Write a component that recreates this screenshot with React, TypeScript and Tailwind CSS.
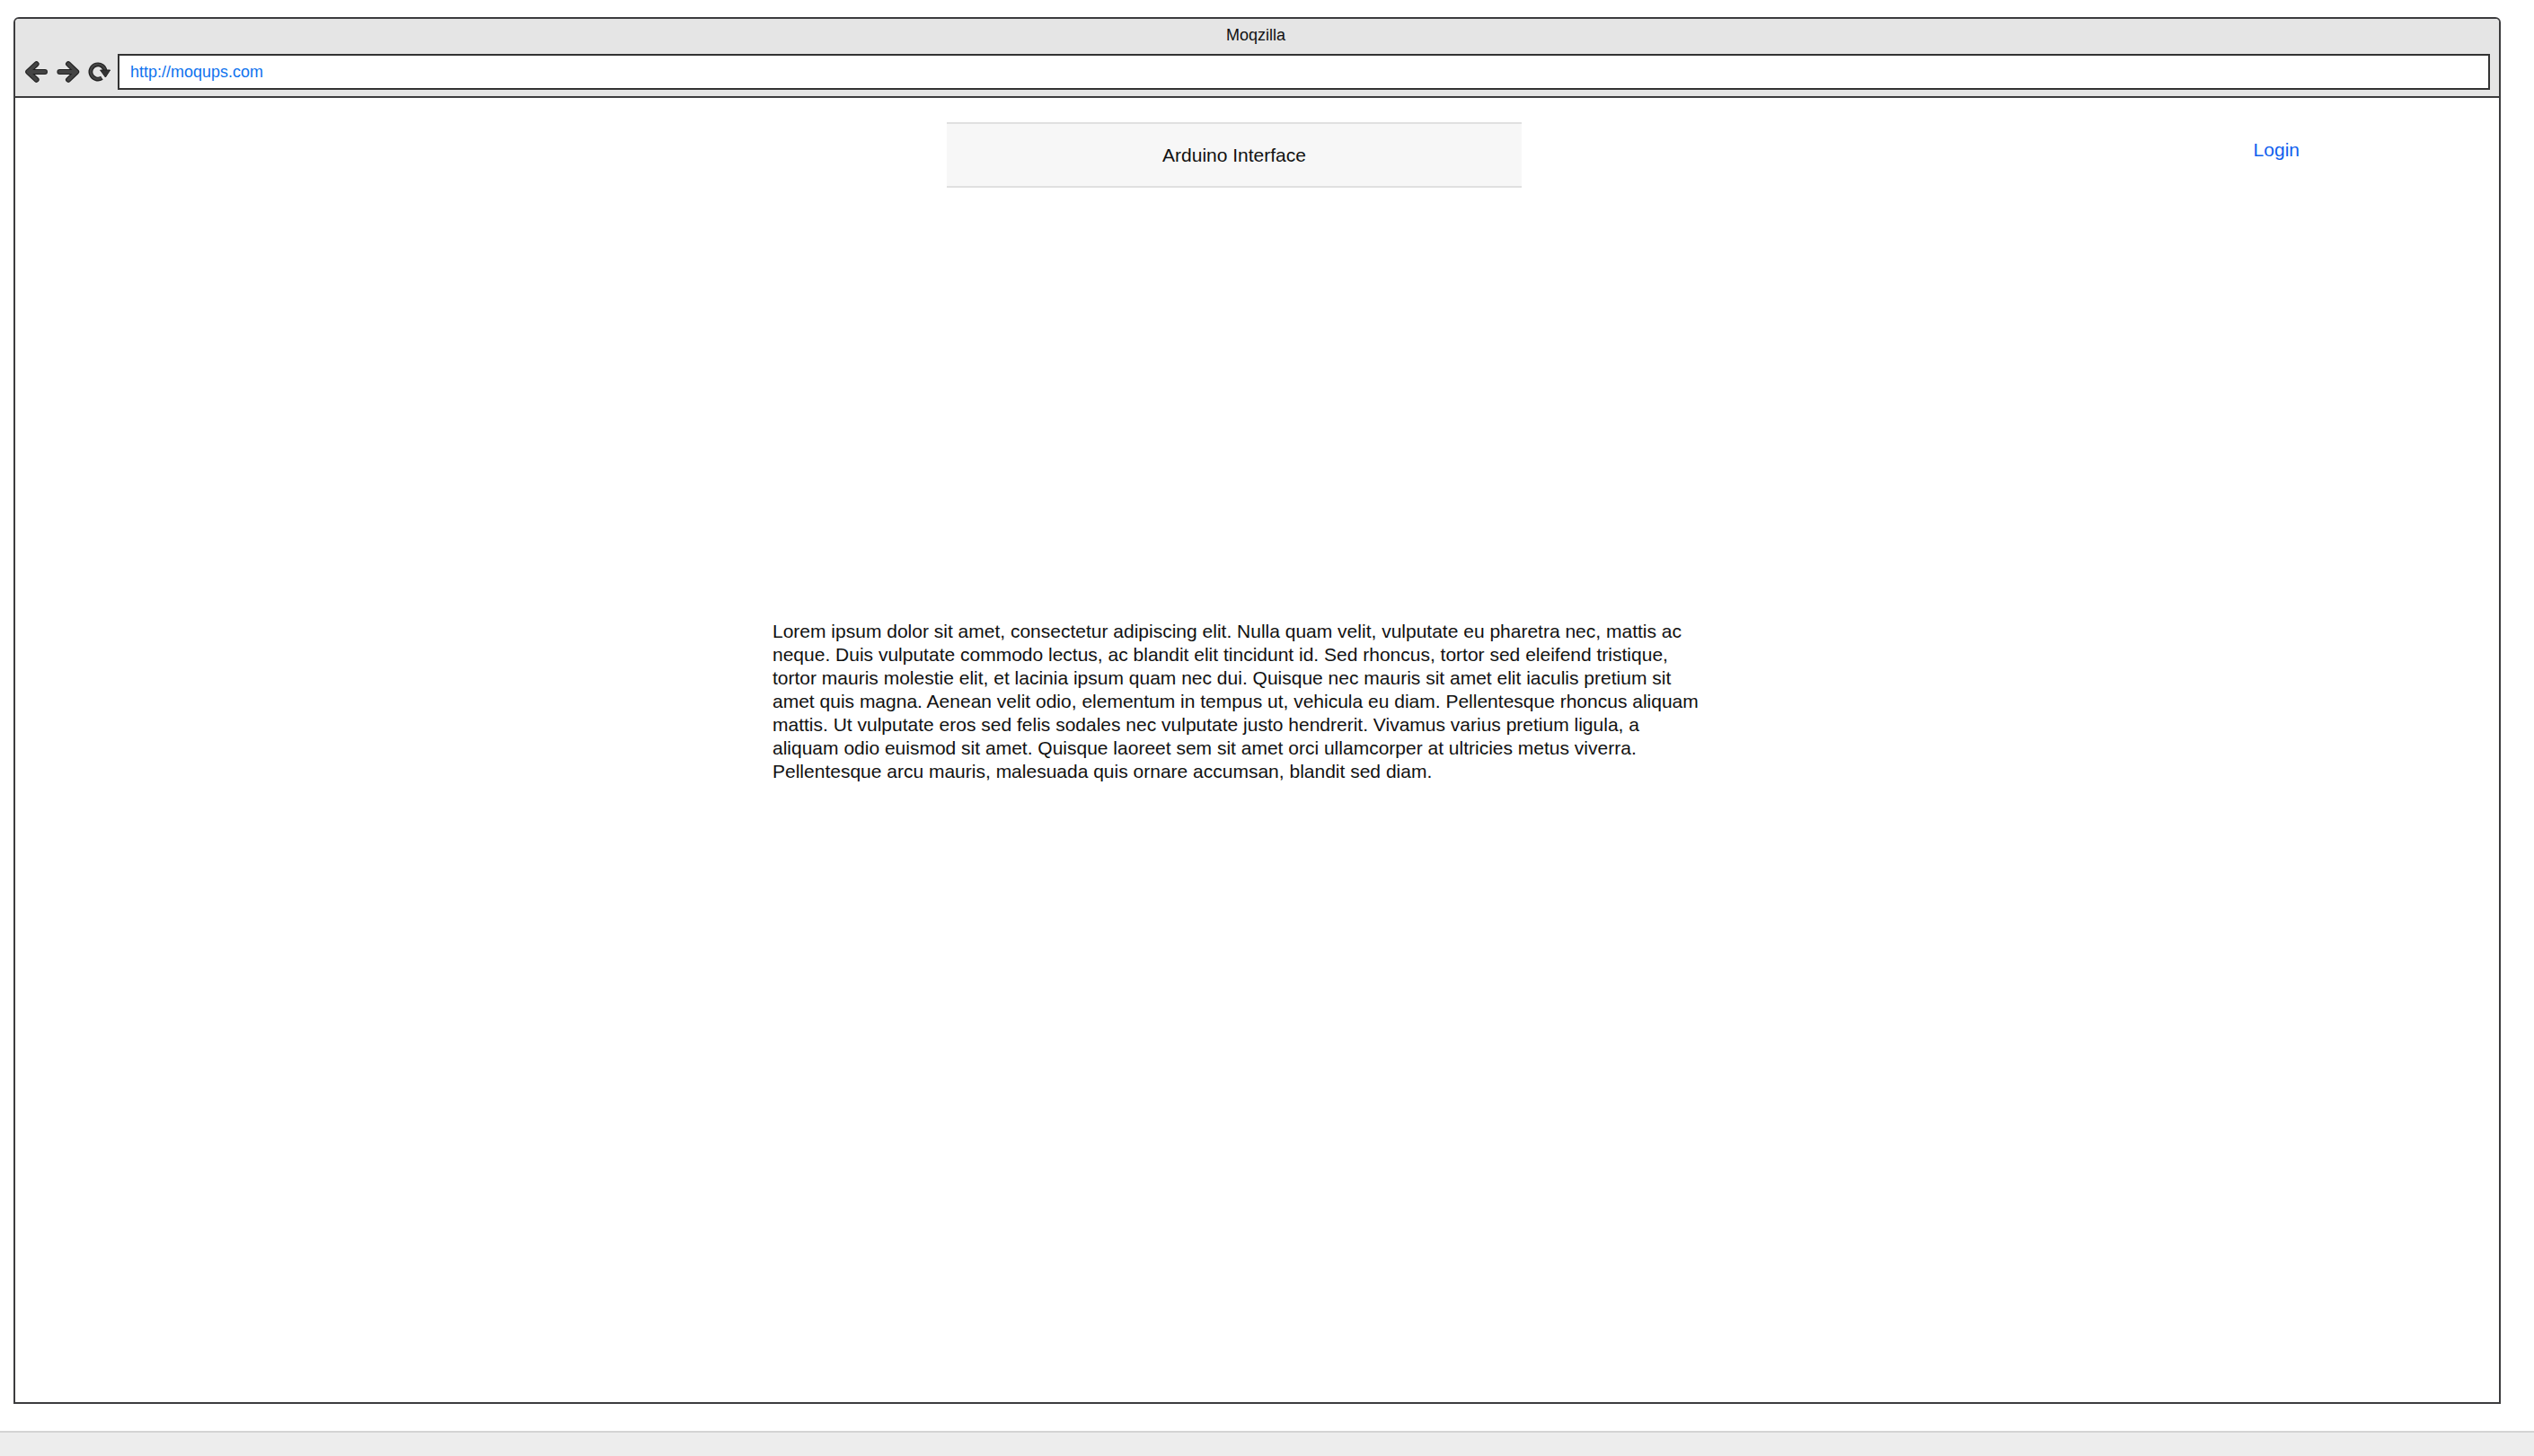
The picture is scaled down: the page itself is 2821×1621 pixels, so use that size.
import type { FormEvent } from "react";

function BackIcon() {
  return (
    <svg viewBox="0 0 26 24" className="h-6 w-[26px]" fill="none" strokeLinecap="round" strokeLinejoin="round" aria-hidden="true">
      <path d="M12.6 3.2 L3.2 12 L12.6 20.8 M4 12 H22" stroke="#222" strokeWidth="6" />
      <path d="M12.6 3.2 L3.2 12 L12.6 20.8 M4 12 H22" stroke="#444" strokeWidth="3.8" />
    </svg>
  );
}

function ForwardIcon() {
  return (
    <svg viewBox="0 0 26 24" className="h-6 w-[26px]" fill="none" strokeLinecap="round" strokeLinejoin="round" aria-hidden="true">
      <path d="M13 3.2 L22.2 12 L13 20.8 M21 12 H3.4" stroke="#222" strokeWidth="6" />
      <path d="M13 3.2 L22.2 12 L13 20.8 M21 12 H3.4" stroke="#444" strokeWidth="3.8" />
    </svg>
  );
}

function ReloadIcon() {
  return (
    <svg viewBox="0 0 26 24" className="h-6 w-[26px]" fill="none" aria-hidden="true">
      <path d="M15.4 18.8 A8.1 8.1 0 1 1 19.1 11.5" stroke="#222" strokeWidth="4.8" />
      <path d="M14.8 18.9 A8.1 8.1 0 1 1 19.1 11.5" stroke="#444" strokeWidth="2.4" />
      <path d="M13.6 10 H24.6 L19.4 18 Z" fill="#333" stroke="#222" strokeLinejoin="round" />
    </svg>
  );
}

export default function App() {
  const stay = (e: FormEvent) => e.preventDefault();
  return (
    <div className="flex min-h-screen flex-col bg-white font-['Liberation_Sans',Arial,sans-serif] text-[#111]">
      <div className="mt-[19px] mr-[37px] mb-[30px] ml-[15px] flex grow flex-col rounded-t-md border-2 border-[#3c3c3e]">
        <header className="rounded-t-sm border-b-2 border-[#3c3c3e] bg-[#e5e5e5] pr-2.5 pb-[7px] pl-[11px]">
          <h1 className="pr-1 pb-[3px] text-center text-lg leading-9">Moqzilla</h1>
          <form onSubmit={stay} className="flex items-center">
            <nav className="mr-[7px] flex gap-[9px]">
              <button type="button" aria-label="Back"><BackIcon /></button>
              <button type="button" aria-label="Forward"><ForwardIcon /></button>
              <button type="button" aria-label="Reload"><ReloadIcon /></button>
            </nav>
            <input
              type="text"
              aria-label="Address"
              defaultValue="http://moqups.com"
              className="h-10 grow border-2 border-[#333] bg-white px-3 text-lg text-[#0f73ee] outline-none"
            />
          </form>
        </header>
        <main className="grow">
          <div className="grid grid-cols-[1037fr_640fr_1088fr] pt-[27px]">
            <h2 className="col-start-2 border-y-2 border-[#e0e0e0] bg-[#f7f7f7] text-center text-[21px] leading-[69px]">
              Arduino Interface
            </h2>
            <div className="flex items-start justify-end pt-[18px] pr-[222px]">
              <a href="#login" className="text-[21px] leading-[26px] text-[#1060ee]">Login</a>
            </div>
          </div>
          <div className="grid grid-cols-[843fr_1036fr_886fr] pt-[481px]">
            <p className="col-start-2 text-[21px] leading-[26px]">
              Lorem ipsum dolor sit amet, consectetur adipiscing elit. Nulla quam velit, vulputate eu pharetra nec, mattis
              ac neque. Duis vulputate commodo lectus, ac blandit elit tincidunt id. Sed rhoncus, tortor sed eleifend
              tristique, tortor mauris molestie elit, et lacinia ipsum quam nec dui. Quisque nec mauris sit amet elit
              iaculis pretium sit amet quis magna. Aenean velit odio, elementum in tempus ut, vehicula eu diam.
              Pellentesque rhoncus aliquam mattis. Ut vulputate eros sed felis sodales nec vulputate justo hendrerit.
              Vivamus varius pretium ligula, a aliquam odio euismod sit amet. Quisque laoreet sem sit amet orci
              ullamcorper at ultricies metus viverra. Pellentesque arcu mauris, malesuada quis ornare accumsan, blandit
              sed diam.
            </p>
          </div>
        </main>
      </div>
      <footer className="h-7 border-t-2 border-[#d4d4d4] bg-[#ededed]" />
    </div>
  );
}
